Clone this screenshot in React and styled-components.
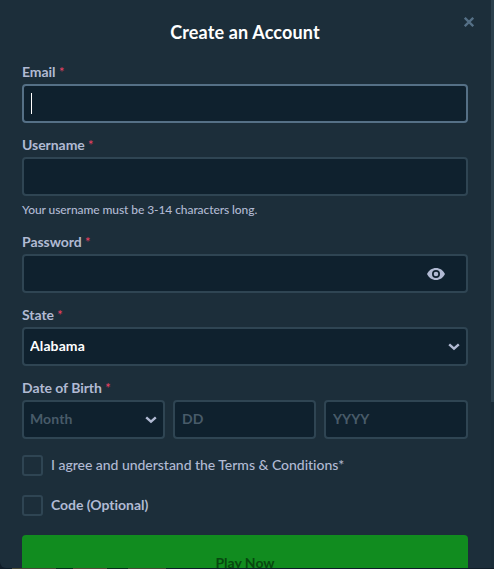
import React from "react";
import styled, { createGlobalStyle } from "styled-components";

const GlobalStyle = createGlobalStyle`
  *, *::before, *::after { box-sizing: border-box; }
  html, body { margin: 0; overflow: hidden; background: #101d29; }
  body, input, select, button { font-family: "Lato", "Liberation Sans", sans-serif; }
`;

const Modal = styled.main`
  position: relative;
  width: 494px;
  height: 568px;
  overflow: hidden;
  padding: 0 26px 0 22px;
  background: #1c2e3a;
  border-bottom-left-radius: 6px;
`;

const Backdrop = styled.div`
  width: 494px;
  height: 1px;
  background: linear-gradient(
    90deg,
    #101d29 12px,
    #4b4a38 12px 56px,
    #0d2a1c 56px 73px,
    #5b4a3c 73px 107px,
    #0d2a1c 107px 128px,
    #4b4a38 128px 166px,
    #101d29 166px
  );
`;

const ScrollTrack = styled.div`
  position: absolute;
  top: 0;
  right: 0;
  width: 3px;
  height: 100%;
  background: #1a2c38;
`;

const ScrollThumb = styled.div`
  width: 3px;
  height: 402px;
  background: #2b404d;
`;

const CloseButton = styled.button`
  position: absolute;
  top: 17px;
  right: 20px;
  width: 10px;
  height: 10px;
  padding: 0;
  border: 0;
  background: none;
  svg { display: block; }
`;

const Title = styled.h1`
  margin: 0;
  height: 61px;
  line-height: 64px;
  text-align: center;
  font-size: 18px;
  font-weight: 700;
  letter-spacing: 0.15px;
  color: #fff;
`;

const Form = styled.form`
  display: flex;
  flex-direction: column;
`;

const Field = styled.div`
  display: flex;
  flex-direction: column;
  margin-bottom: 11px;
`;

const Label = styled.label`
  height: 23px;
  line-height: 22px;
  font-size: 14px;
  font-weight: 700;
  letter-spacing: -0.05px;
  color: #b1bad3;
  white-space: nowrap;
`;

const Required = styled.span`
  font-size: 13px;
  font-weight: 400;
  color: #ed4163;
`;

const Control = styled.div`
  position: relative;
  display: flex;
  align-items: center;
  height: 39px;
  border: 2px solid ${(p) => (p.$active ? "#557086" : "#2f4553")};
  border-radius: 4px;
  background: #0f212e;
  svg { position: absolute; right: ${(p) => p.$iconRight || "6px"}; pointer-events: none; }
`;

const Input = styled.input`
  width: 100%;
  height: 100%;
  padding: 0 7px 2px;
  border: 0;
  outline: 0;
  background: transparent;
  font-size: 14px;
  font-weight: 700;
  color: #fff;
  &::placeholder { color: #485b69; opacity: 1; }
`;

const Select = styled.select`
  appearance: none;
  width: 100%;
  height: 100%;
  padding: 0 6px 2px;
  border: 0;
  outline: 0;
  background: transparent;
  font-size: 14px;
  font-weight: 700;
  letter-spacing: 0.1px;
  opacity: 1;
  color: ${(p) => (p.$empty ? "#485b69" : "#fff")};
`;

const Caret = styled.span`
  position: absolute;
  left: 7px;
  width: 1px;
  height: 21px;
  background: #fff;
`;

const Hint = styled.p`
  margin: 0;
  height: 24px;
  line-height: 28px;
  font-size: 12px;
  font-weight: 500;
  letter-spacing: -0.08px;
  color: #b1bad3;
`;

const DateRow = styled.div`
  display: grid;
  grid-template-columns: 143px 143px 1fr;
  gap: 8px;
`;

const CheckRow = styled.label`
  display: flex;
  align-items: center;
  gap: 8px;
  height: 21px;
  margin: ${(p) => (p.$first ? "5px 0 19px" : "0 0 19px")};
  line-height: 17px;
  font-size: 14px;
  font-weight: ${(p) => (p.$bold ? 700 : 500)};
  letter-spacing: -0.03px;
  color: #b1bad3;
`;

const CheckText = styled.span`
  padding-bottom: 2px;
`;

const Checkbox = styled.input`
  appearance: none;
  width: 21px;
  height: 21px;
  margin: 0;
  border: 2px solid #2f4553;
  border-radius: 3px;
`;

const Submit = styled.button`
  height: 54px;
  padding: 0;
  border: 0;
  border-radius: 4px;
  background: #118c1f;
  color: #07480f;
  font-size: 14px;
  font-weight: 700;
`;

const Chevron = () => (
  <svg width="12" height="8" viewBox="0 0 12 8" fill="none">
    <path d="M1.2 1.3 6 5.7l4.8-4.4" stroke="#b1bad3" strokeWidth="2.4" />
  </svg>
);

const Eye = () => (
  <svg width="18" height="12" viewBox="0 0 18 12">
    <path
      fill="#b1bad3"
      fillRule="evenodd"
      d="M9 0C5.1 0 1.8 2.3 0 6c1.800 3.700 5.100 6 9 6s7.200-2.300 9-6C16.200 2.300 12.900 0 9 0Zm0 10a4 4 0 1 1 0-8 4 4 0 0 1 0 8Zm0-6.300a2.300 2.300 0 1 0 0 4.600 2.300 2.300 0 0 0 0-4.600Z"
    />
  </svg>
);

const FieldLabel = ({ children }) => (
  <Label>
    {children} <Required>*</Required>
  </Label>
);

export default function App() {
  return (
    <>
      <GlobalStyle />
      <Modal>
        <CloseButton aria-label="Close">
          <svg width="10" height="10" viewBox="0 0 10 10">
            <path d="m.8.8 8.400 8.400M9.200.8.8 9.200" stroke="#557086" strokeWidth="2.300" />
          </svg>
        </CloseButton>
        <Title>Create an Account</Title>
        <Form>
          <Field>
            <FieldLabel>Email</FieldLabel>
            <Control $active>
              <Input type="email" />
              <Caret />
            </Control>
          </Field>
          <Field>
            <FieldLabel>Username</FieldLabel>
            <Control>
              <Input />
            </Control>
            <Hint>Your username must be 3-14 characters long.</Hint>
          </Field>
          <Field>
            <FieldLabel>Password</FieldLabel>
            <Control $iconRight="21px">
              <Input type="password" />
              <Eye />
            </Control>
          </Field>
          <Field>
            <FieldLabel>State</FieldLabel>
            <Control>
              <Select defaultValue="Alabama">
                <option>Alabama</option>
              </Select>
              <Chevron />
            </Control>
          </Field>
          <Field>
            <FieldLabel>Date of Birth</FieldLabel>
            <DateRow>
              <Control>
                <Select $empty defaultValue="Month">
                  <option>Month</option>
                </Select>
                <Chevron />
              </Control>
              <Control>
                <Input placeholder="DD" />
              </Control>
              <Control>
                <Input placeholder="YYYY" />
              </Control>
            </DateRow>
          </Field>
          <CheckRow $first>
            <Checkbox type="checkbox" />
            <CheckText>I agree and understand the Terms & Conditions*</CheckText>
          </CheckRow>
          <CheckRow $bold>
            <Checkbox type="checkbox" />
            <CheckText>Code (Optional)</CheckText>
          </CheckRow>
          <Submit type="button">Play Now</Submit>
        </Form>
        <ScrollTrack>
          <ScrollThumb />
        </ScrollTrack>
      </Modal>
      <Backdrop />
    </>
  );
}
